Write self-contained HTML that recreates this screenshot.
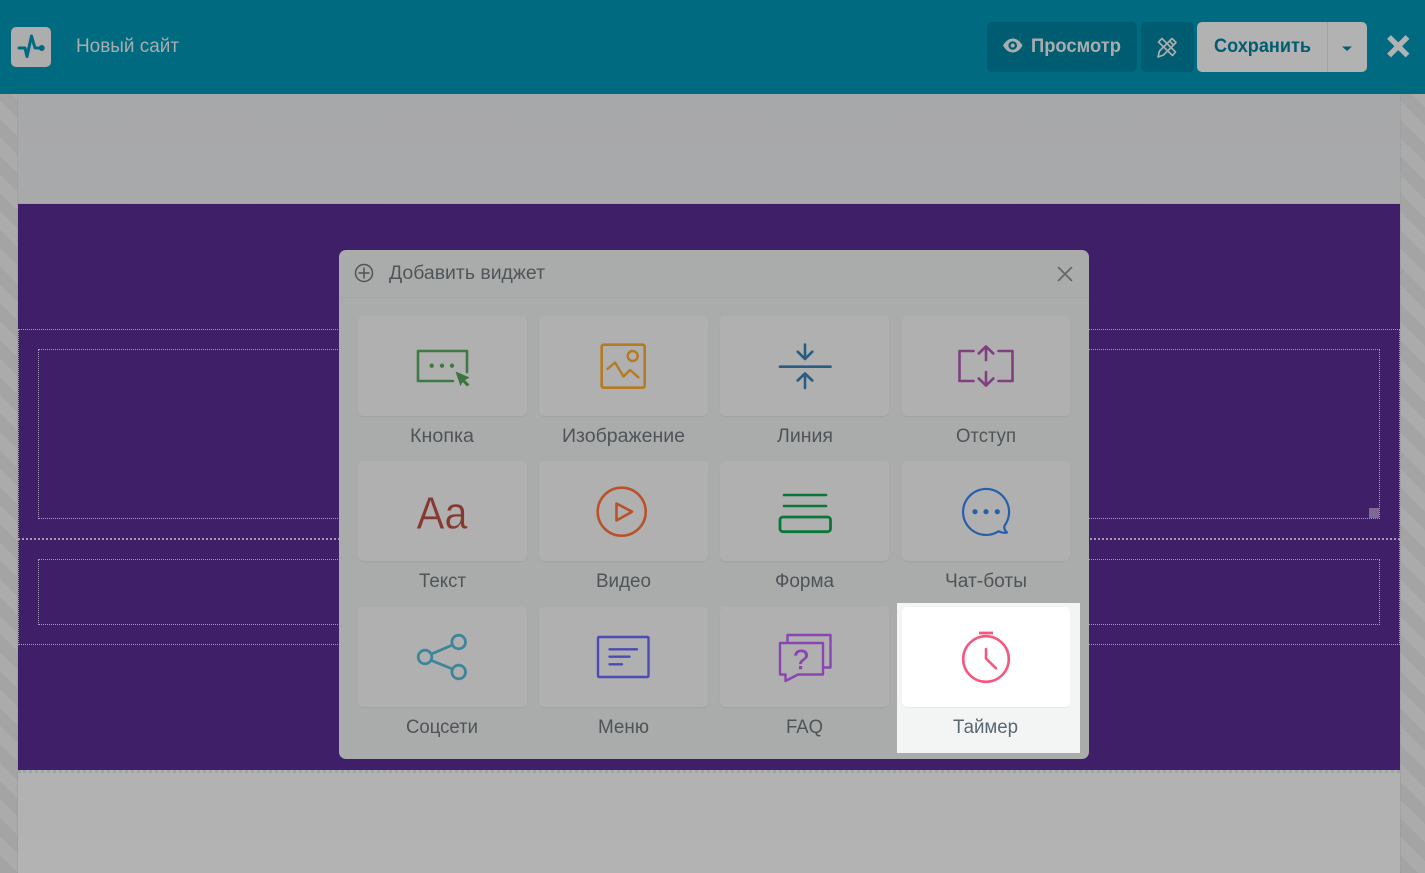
<!DOCTYPE html>
<html lang="ru">
<head>
<meta charset="utf-8">
<title>Новый сайт</title>
<style>
html,body{margin:0;padding:0;width:1425px;height:873px;overflow:hidden;background:#b2b2b2}
body{position:relative;font-family:"Liberation Sans",sans-serif}
div{position:absolute;box-sizing:border-box}
svg{position:absolute;left:0;top:0}
text{font-family:"Liberation Sans",sans-serif}
.stripe{top:94px;bottom:0;width:18px;background:repeating-linear-gradient(45deg,#a4a4a4 0 13px,#ababab 13px 26px)}
.dot{border-style:dotted;border-color:#a79bb8;border-width:0}
.card{width:169px;height:100px;background:#b0b0b0;border-radius:5px;box-shadow:0 1px 1px rgba(0,0,0,.05)}
</style>
</head>
<body>
<div style="left:0;top:94px;width:1425px;height:779px;background:linear-gradient(#a7a8a9,#b3b3b3)"></div>
<div class="stripe" style="left:0"></div>
<div class="stripe" style="left:1400px;width:25px"></div>
<div style="left:17px;top:94px;width:1px;height:779px;border-left:1px dotted #9a9a9a"></div>
<div style="left:1400px;top:94px;width:1px;height:779px;border-left:1px dotted #9a9a9a"></div>

<div style="left:18px;top:204px;width:1382px;height:566px;background:#401f69"></div>
<div style="left:18px;top:770px;width:1382px;height:3px;border-top:3px dotted #a0a3a5"></div>
<div style="left:18px;top:203px;width:1382px;height:1px;border-top:1px dotted #9c9c9c"></div>

<div class="dot" style="left:18px;top:329px;width:1382px;height:1px;border-top-width:1px"></div>
<div class="dot" style="left:38px;top:349px;width:1342px;height:170px;border-width:1px"></div>
<div class="dot" style="left:18px;top:538px;width:1382px;height:2px;border-top-width:2px"></div>
<div class="dot" style="left:38px;top:559px;width:1342px;height:66px;border-width:1px"></div>
<div class="dot" style="left:18px;top:644px;width:1382px;height:1px;border-top-width:1px"></div>
<div style="left:18px;top:329px;width:1px;height:316px;border-left:1px dotted #a79bb8"></div>
<div style="left:1399px;top:329px;width:1px;height:316px;border-left:1px dotted #a79bb8"></div>
<div style="left:1369px;top:508px;width:10px;height:10px;background:#7c6a95"></div>

<div style="left:0;top:0;width:1425px;height:94px;background:#006a80"></div>
<div style="left:11px;top:27px;width:40px;height:40px;background:#adadad;border-radius:5px"></div>
<div style="left:987px;top:22px;width:150px;height:50px;background:#005c70;border-radius:5px"></div>
<div style="left:1141px;top:22px;width:53px;height:50px;background:#005c70;border-radius:5px"></div>
<div style="left:1197px;top:22px;width:170px;height:50px;background:#b2b2b2;border-radius:5px"></div>
<div style="left:1327px;top:22px;width:1px;height:50px;background:#a2a2a2"></div>

<div style="left:339px;top:250px;width:750px;height:509px;background:#a9acaa;border-radius:7px"></div>
<div style="left:339px;top:297px;width:750px;height:1px;background:#98adb2"></div>

<div class="card" style="left:358px;top:316px"></div>
<div class="card" style="left:539px;top:316px"></div>
<div class="card" style="left:720px;top:316px"></div>
<div class="card" style="left:902px;top:316px;width:168px"></div>
<div class="card" style="left:358px;top:461px"></div>
<div class="card" style="left:539px;top:461px"></div>
<div class="card" style="left:720px;top:461px"></div>
<div class="card" style="left:902px;top:461px;width:168px"></div>
<div class="card" style="left:358px;top:607px"></div>
<div class="card" style="left:539px;top:607px"></div>
<div class="card" style="left:720px;top:607px"></div>
<div style="left:897px;top:603px;width:183px;height:150px;background:#f3f5f5"></div>
<div class="card" style="left:902px;top:607px;width:168px;background:#fff"></div>

<svg width="1425" height="873" viewBox="0 0 1425 873" fill="none" stroke-linecap="round" stroke-linejoin="round">
  <!-- header -->
  <path d="M19 48H25L27 56.5L31.5 36L35 48H41" stroke="#006a80" stroke-width="3"/>
  <circle cx="41.7" cy="48" r="3" fill="#006a80"/>
  <text x="76" y="52" font-size="19" fill="#a9adae" textLength="103" lengthAdjust="spacingAndGlyphs">Новый сайт</text>
  <path d="M1003 45.5C1006 40 1010 38.5 1012.7 38.5C1015.5 38.5 1019.5 40 1022.5 45.5C1019.5 51 1015.5 52.5 1012.7 52.5C1010 52.5 1006 51 1003 45.5Z" fill="#a9adae"/>
  <circle cx="1012.7" cy="45.5" r="4.3" fill="#005c70"/>
  <circle cx="1012.7" cy="45.5" r="2" fill="#a9adae"/>
  <text x="1031" y="52" font-size="19" font-weight="700" fill="#a9adae" textLength="90" lengthAdjust="spacingAndGlyphs">Просмотр</text>
  <g stroke="#a9adae" stroke-width="1.7">
    <path d="M1158.5 42L1162 38.5L1175.5 52L1172.5 55.5Z"/>
    <path d="M1172 38.5L1176 42.5L1163.5 55L1158 57L1159.5 51Z"/>
    <path d="M1169.5 41L1173.5 45"/>
  </g>
  <text x="1214" y="52" font-size="19" font-weight="700" fill="#005d72" textLength="97" lengthAdjust="spacingAndGlyphs">Сохранить</text>
  <path d="M1342 46.5H1352L1347 51Z" fill="#005d72"/>
  <path d="M1389 37L1407.5 55.5M1407.5 37L1389 55.5" stroke="#b2b2b2" stroke-width="5.4" stroke-linecap="butt"/>

  <!-- dialog header -->
  <circle cx="364" cy="273" r="8.5" stroke="#505559" stroke-width="1.5"/>
  <path d="M359 273H369M364 268V278" stroke="#505559" stroke-width="1.5"/>
  <text x="389" y="279" font-size="19" fill="#505559" textLength="156" lengthAdjust="spacingAndGlyphs">Добавить виджет</text>
  <path d="M1058.5 267.5L1071.5 280.5M1071.5 267.5L1058.5 280.5" stroke="#62656a" stroke-width="1.6"/>

  <!-- Кнопка -->
  <path d="M467 372V351H418V381H453" stroke="#3f7a45" stroke-width="2.6"/>
  <circle cx="431.7" cy="365.7" r="2.2" fill="#3f7a45"/><circle cx="442" cy="365.7" r="2.2" fill="#3f7a45"/><circle cx="452" cy="365.7" r="2.2" fill="#3f7a45"/>
  <path d="M456 372L469 377.5L464.5 380L469 384.5L467 386L462.5 381.5L460.5 385.5Z" fill="#3a7540" stroke="#3a7540" stroke-width=".6"/>

  <!-- Изображение -->
  <rect x="601.7" y="344.7" width="43" height="43" rx="2" stroke="#b57a22" stroke-width="2.6"/>
  <circle cx="632.7" cy="356" r="5" stroke="#b57a22" stroke-width="2.4"/>
  <path d="M607.5 369L615 362.5L623.5 376.5L630 370L638.3 377.3" stroke="#b57a22" stroke-width="2.4"/>

  <!-- Линия -->
  <g stroke="#265d80" stroke-width="2.6">
    <path d="M780 366.7H830.5"/>
    <path d="M805 344.5V358.5M797.7 351.7L805 359L812.3 351.7"/>
    <path d="M805 388V374M797.7 380.5L805 373.5L812.3 380.5"/>
  </g>

  <!-- Отступ -->
  <g stroke="#804080" stroke-width="2.6">
    <path d="M973.5 351H959.5V381H973.5M998.5 351H1012.5V381H998.5"/>
    <path d="M986 347V360M978.7 353.5L986 346.5L993.3 353.5"/>
    <path d="M986 372V385M978.7 378.5L986 385.5L993.3 378.5"/>
  </g>

  <!-- Текст -->
  <text x="416.5" y="528.5" font-size="45" fill="#85392f" stroke="#b0b0b0" stroke-width=".4" textLength="28" lengthAdjust="spacingAndGlyphs">A</text>
  <text x="444.5" y="528.5" font-size="45" fill="#85392f" stroke="#b0b0b0" stroke-width=".4" textLength="23" lengthAdjust="spacingAndGlyphs">a</text>

  <!-- Видео -->
  <circle cx="621.7" cy="511.7" r="24" stroke="#b9522a" stroke-width="2.6"/>
  <path d="M616.5 503.5L632 511.7L616.5 520.5Z" stroke="#b9522a" stroke-width="2.6"/>

  <!-- Форма -->
  <g stroke="#0b763a">
    <path d="M784 495H826M784 506H826" stroke-width="2.6"/>
    <rect x="780" y="517" width="50.5" height="14.7" rx="3" stroke-width="2.8"/>
  </g>

  <!-- Чат-боты -->
  <path d="M1004.5 525.7A23 23 0 1 0 998.5 531.3Q1003 533.5 1007 532.5Q1003.5 529.5 1004.5 525.7Z" stroke="#255fae" stroke-width="2.2"/>
  <circle cx="975" cy="511.7" r="2.6" fill="#255fae"/>
  <circle cx="986" cy="511.7" r="2.6" fill="#255fae"/>
  <circle cx="997.3" cy="511.7" r="2.6" fill="#255fae"/>

  <!-- Соцсети -->
  <g stroke="#3f8599" stroke-width="2.8">
    <circle cx="458.7" cy="642" r="6.8"/>
    <circle cx="425" cy="657" r="6.8"/>
    <circle cx="458.7" cy="672" r="6.8"/>
    <path d="M431.5 654L452.5 645M431.5 660.5L452.5 669"/>
  </g>

  <!-- Меню -->
  <rect x="598" y="637" width="50.5" height="40" rx="1" stroke="#4b4bb5" stroke-width="2.4"/>
  <path d="M609.5 649.3H637M609.5 656.7H629.5M609.5 664.3H622" stroke="#4b4bb5" stroke-width="2.4"/>

  <!-- FAQ -->
  <g stroke="#8a45b2" stroke-width="2.4">
    <path d="M787.5 642V635H830.5V667.5H823.5"/>
    <path d="M780 643H823V674.5H798L785.5 681V674.5H780Z"/>
  </g>
  <text x="801" y="669" font-size="28" fill="#8a45b2" stroke="#8a45b2" stroke-width=".5" text-anchor="middle">?</text>

  <!-- Таймер -->
  <circle cx="986" cy="659" r="22.8" stroke="#f5577f" stroke-width="2.6"/>
  <path d="M979 633H993" stroke="#f5577f" stroke-width="2.8" stroke-linecap="butt"/>
  <path d="M986 649V658.5L996 668.3" stroke="#f5577f" stroke-width="2.6"/>

  <!-- labels -->
  <g font-size="19" fill="#4f5458">
    <text x="410" y="442" textLength="64" lengthAdjust="spacingAndGlyphs">Кнопка</text>
    <text x="562" y="442" textLength="123" lengthAdjust="spacingAndGlyphs">Изображение</text>
    <text x="777" y="442" textLength="56" lengthAdjust="spacingAndGlyphs">Линия</text>
    <text x="956" y="442" textLength="60" lengthAdjust="spacingAndGlyphs">Отступ</text>
    <text x="419" y="587" textLength="47" lengthAdjust="spacingAndGlyphs">Текст</text>
    <text x="596" y="587" textLength="55" lengthAdjust="spacingAndGlyphs">Видео</text>
    <text x="775" y="587" textLength="59" lengthAdjust="spacingAndGlyphs">Форма</text>
    <text x="945" y="587" textLength="82" lengthAdjust="spacingAndGlyphs">Чат-боты</text>
    <text x="406" y="733" textLength="72" lengthAdjust="spacingAndGlyphs">Соцсети</text>
    <text x="598" y="733" textLength="51" lengthAdjust="spacingAndGlyphs">Меню</text>
    <text x="786" y="733" textLength="37" lengthAdjust="spacingAndGlyphs">FAQ</text>
    <text x="953" y="733" textLength="65" lengthAdjust="spacingAndGlyphs" fill="#5c6772">Таймер</text>
  </g>
</svg>
</body>
</html>
